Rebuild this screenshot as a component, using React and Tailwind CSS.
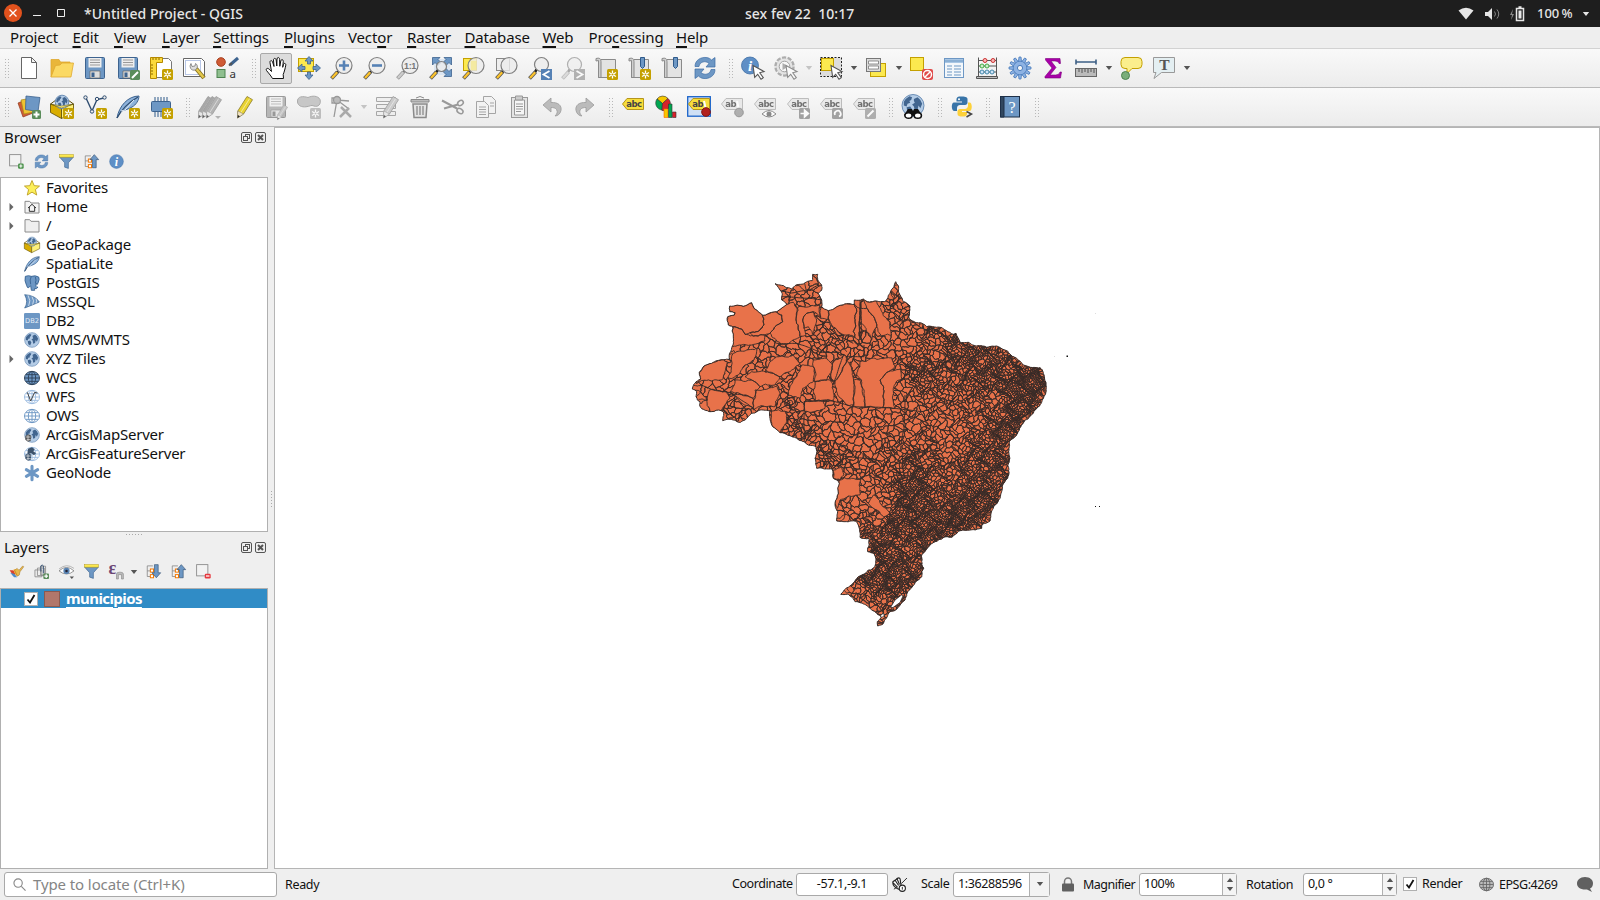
import React from "react";

/* ---------- map geometry ---------- */

// Each coastline section is digitised in thirds of a pixel from its own origin.
const section = (ox, oy, flat) => {
  const out = [];
  for (let i = 0; i < flat.length; i += 2) out.push([ox + flat[i] / 3, oy + flat[i + 1] / 3]);
  return out;
};
const NW = (f) => section(680, 265, f);
const NE = (f) => section(880, 265, f);
const SO = (f) => section(780, 450, f);

const OUTLINE = [
  ...NW([37,372,48,350,62,342,58,322,72,303,100,292,130,284,148,284,152,260,160,215,158,185,145,180,143,155,163,150,165,143,149,140,149,123,190,124,215,113,222,130,235,140,247,150,262,147,290,140,322,118,305,105,307,90,300,75,285,56,300,60,320,68,335,72,345,62,370,57,397,47,398,28,413,28,413,45,425,60,425,75,415,85,425,105,425,125,445,137,470,125,500,116,523,118,523,105,550,102,562,110,590,108,613,110,630,85]),
  ...NE([47,50,55,62,60,90,70,110,90,123,88,150,87,160,105,172,130,177,140,185,170,187,200,197,220,208,228,205,240,233,265,232,290,243,320,247,350,243,380,257,410,280,430,300,450,307,480,308,490,325,498,360,495,390,485,412,460,445,435,465,415,500,400,520,388,530,387,570]),
  ...SO([688,30,683,85,668,105,660,145,645,165,632,195,630,213,608,222,605,235,570,240,540,242,515,262,490,263,465,275,440,297,425,315,425,335,431,355,425,380,405,398,388,420,375,450,355,472,330,485,322,500,308,523,293,528,292,515,305,500,290,490,270,475,240,458,225,455,205,432,182,433,205,412,235,380,265,360,285,350,288,330,283,312,263,305,268,285,267,265,240,262,235,225,230,215,195,215,170,213,173,185,165,160,175,130,178,100,160,85,157,58,110,55]),
  ...NW([410,610,405,580,408,545,380,537,350,520,330,512,300,503,275,480,270,460,270,437,240,435,215,445,200,460,182,472,160,465,128,467,130,440,115,435,90,440,60,425,60,410,48,395,50,380]),
];

const LARGE = [
  NW([149,123,190,124,215,113,222,130,235,140,247,150,252,180,240,195,210,203,195,208,185,192,160,185,145,180,143,155,163,150,165,143,149,140]),
  NW([247,150,262,147,290,140,305,150,308,170,285,185,270,205,255,210,220,213,210,203,240,195,252,180]),
  NW([160,185,185,192,195,208,220,213,255,210,255,228,235,235,200,240,157,245,158,215]),
  NW([290,140,322,118,340,112,355,135,348,165,355,195,360,215,330,232,305,240,290,228,275,215,270,205,285,185,308,170,305,150]),
  NW([355,125,420,122,422,155,400,140,380,145,368,165,372,190,378,212,360,215,355,195,348,165]),
  NW([380,145,400,140,410,165,403,190,398,208,385,185,372,190,368,165]),
  NW([445,137,470,125,500,116,523,118,530,140,525,170,520,200,525,218,500,210,475,200,450,180,445,160]),
  NW([422,127,445,137,445,163,422,160]),
  NW([523,118,540,130,540,225,525,218,520,200,525,170,530,140]),
  NW([550,102,562,110,590,108,605,140,630,170,635,210,605,212,590,185,575,150,560,130]),
  NW([540,130,560,130,575,150,590,185,575,225,560,200,540,170]),
  NW([62,342,58,322,72,303,100,292,130,284,142,290,135,320,125,345,95,348,48,355]),
  NW([200,255,230,250,222,285,195,300,175,330,145,340,155,300,160,265]),
  NW([215,320,250,318,280,325,300,335,285,360,240,365,215,345,195,335]),
  NW([290,275,340,270,360,295,330,320,300,335,280,325,255,315,270,290]),
  NW([225,375,290,363,300,385,285,425,220,435,225,400]),
  NW([88,375,140,380,150,400,125,435,90,440,82,405]),
  NW([165,345,215,345,240,365,228,378,220,400,190,390,150,380,160,365]),
  NW([150,382,190,392,220,402,220,432,185,415]),
  NW([365,300,400,305,400,350,368,370,360,400,325,390,330,365,345,340]),
  NW([400,285,440,280,455,295,440,345,405,350,400,305]),
  NW([405,350,450,345,460,375,458,408,405,408,400,380]),
  NW([465,285,495,270,500,290,485,320,462,350,452,330]),
  NW([500,285,510,300,520,340,520,420,500,420,470,380,465,350,485,320]),
  NW([520,345,540,345,555,428,520,425]),
  NW([540,290,635,278,645,305,625,320,600,345,608,428,555,428,545,345,530,330]),
  NW([600,345,625,320,660,312,665,340,640,370,645,430,608,428]),
  NW([375,410,430,408,435,430,400,440,375,440]),
  NW([275,438,315,438,320,470,300,503,275,480]),
  SO([180,90,215,85,242,88,240,135,205,138,180,150,172,175,165,160,175,130]),
  SO([160,60,185,50,192,75,180,90,160,85]),
  SO([280,135,305,165,330,190,310,200,285,178,265,160]),
];

const BORDERS = [
  NW([373,408,373,530]), NW([375,408,458,408,515,425,660,432,725,440]), NW([255,210,290,235,350,235,420,262,480,262]),
  NW([60,358,100,375,150,383,220,430]), NW([420,165,460,210,500,260]), NW([445,160,470,210,520,235]),
  NW([540,105,540,225]), NW([543,110,543,225]), NW([490,270,458,360]), NW([552,240,552,275,500,275]),
  NW([305,78,335,84,390,74,415,60]), NW([305,95,345,97,390,100,420,104]),
  SO([110,0,200,20,290,30]), NE([75,390,72,490,60,560]),
];

// x, y, typical cell width
const SPACING = [
  715,330,26, 740,355,11, 770,352,9, 710,395,12, 735,415,7, 760,390,14, 780,330,22, 800,290,11, 815,300,9,
  850,310,18, 830,345,7, 850,350,8, 820,390,12, 850,390,14, 880,390,22, 800,405,7, 798,428,4.2, 805,435,4,
  830,425,12, 850,430,11, 832,459,3.6, 870,445,10, 900,308,5, 885,320,11, 895,345,9, 915,335,8, 930,328,1.9,
  955,340,2, 955,360,2.4, 935,350,7, 905,400,7, 905,425,9, 925,372,2.4, 950,420,8, 950,385,4.5, 990,405,4.6,
  985,375,2, 1010,365,2, 1030,385,1.3, 1035,395,1.3, 1018,378,1.3, 1020,410,1.4, 1005,430,1.8, 950,445,8,
  970,420,5, 985,450,2.4, 985,480,2.3, 965,465,2.8, 930,450,4.2, 900,460,4.5, 912,465,1.7, 912,485,1.7,
  860,470,7, 880,470,5.5, 850,490,12, 845,515,8, 875,500,10, 880,515,7, 905,510,1.4, 890,525,1.5, 935,525,1.4,
  940,495,3.2, 960,515,1.3, 980,500,1.4, 945,475,4.2, 990,490,1.9, 875,545,1.5, 905,547,2.8, 900,560,1.8,
  885,572,1.3, 915,575,1.4, 850,592,5.5, 865,575,1.8, 890,585,1.4, 903,582,3, 870,602,6, 882,605,4, 895,593,1.5,
];

const spacingAt = (x, y) => {
  let a = 0, b = 0;
  for (let i = 0; i < SPACING.length; i += 3) {
    const dx = x - SPACING[i], dy = y - SPACING[i + 1];
    const w = 1 / Math.pow(dx * dx + dy * dy + 6, 1.9);
    a += w * Math.log(SPACING[i + 2]);
    b += w;
  }
  const noise = Math.sin(x * 0.41 + Math.sin(y * 0.23) * 2) * Math.sin(y * 0.37 + Math.sin(x * 0.19) * 2);
  return Math.exp(a / b + noise * 0.38);
};

const inside = (x, y, poly) => {
  let r = false;
  for (let i = 0, j = poly.length - 1; i < poly.length; j = i++) {
    const [xi, yi] = poly[i], [xj, yj] = poly[j];
    if (yi > y !== yj > y && x < ((xj - xi) * (y - yi)) / (yj - yi) + xi) r = !r;
  }
  return r;
};

const hash = (a, b) => {
  const s = Math.sin(a * 12.9898 + b * 78.233) * 43758.5453;
  return s - Math.floor(s) - 0.5;
};

const rough = (p, q, amp, out) => {
  const len = Math.hypot(q[0] - p[0], q[1] - p[1]);
  if (len > 2.6) {
    const mx = (p[0] + q[0]) / 2, my = (p[1] + q[1]) / 2;
    const kx = Math.round(mx * 10), ky = Math.round(my * 10);
    const m = [mx + hash(kx, ky) * len * amp, my + hash(ky, kx) * len * amp];
    rough(p, m, amp, out);
    rough(m, q, amp, out);
  } else out.push(q[0].toFixed(1) + " " + q[1].toFixed(1));
};

const trace = (poly, closed, amp) => {
  const out = [poly[0][0].toFixed(1) + " " + poly[0][1].toFixed(1)];
  const n = closed ? poly.length : poly.length - 1;
  for (let i = 0; i < n; i++) rough(poly[i], poly[(i + 1) % poly.length], amp, out);
  return "M" + out.join("L") + (closed ? "Z" : "");
};

const warp = ([x, y]) => [
  x + 2.3 * Math.sin(y * 0.31 + x * 0.11) + 1.1 * Math.sin(y * 0.57 - x * 0.23 + 1),
  y + 2.3 * Math.sin(x * 0.29 - y * 0.09 + 2) + 1.1 * Math.sin(x * 0.53 + y * 0.27),
];

const buildCells = () => {
  let seed = 20219;
  const rnd = () => ((seed = (seed * 1664525 + 1013904223) % 4294967296) / 4294967296);
  const G = 6, grid = new Map(), sites = [];
  const near = (x, y, r, fn) => {
    for (let gx = Math.floor((x - r) / G); gx <= Math.floor((x + r) / G); gx++)
      for (let gy = Math.floor((y - r) / G); gy <= Math.floor((y + r) / G); gy++) {
        const c = grid.get(gx * 1000 + gy);
        if (c) for (const s of c) if (fn(s) === false) return;
      }
  };
  for (let k = 0; k < 80000; k++) {
    const x = 685 + rnd() * 368, y = 267 + rnd() * 368;
    const u = rnd();
    if (!inside(x, y, OUTLINE)) continue;
    const full = spacingAt(x, y);
    const r = full * (0.42 + u * 0.7);
    let ok = true;
    near(x, y, r, (s) => {
      if (Math.hypot(s[0] - x, s[1] - y) < r) return (ok = false);
    });
    if (!ok) continue;
    const s = [x, y, full];
    sites.push(s);
    const key = Math.floor(x / G) * 1000 + Math.floor(y / G);
    if (!grid.has(key)) grid.set(key, []);
    grid.get(key).push(s);
  }
  const parts = [];
  for (const s of sites) {
    const R = s[2] * 1.5 + 2;
    let poly = [[s[0] - R, s[1] - R], [s[0] + R, s[1] - R], [s[0] + R, s[1] + R], [s[0] - R, s[1] + R]];
    near(s[0], s[1], R * 1.7, (t) => {
      if (t === s) return;
      const nx = t[0] - s[0], ny = t[1] - s[1];
      const c = (nx * (t[0] + s[0]) + ny * (t[1] + s[1])) / 2;
      const next = [];
      for (let i = 0; i < poly.length; i++) {
        const p = poly[i], q = poly[(i + 1) % poly.length];
        const dp = p[0] * nx + p[1] * ny - c, dq = q[0] * nx + q[1] * ny - c;
        if (dp <= 0) next.push(p);
        if (dp < 0 !== dq < 0) {
          const u = dp / (dp - dq);
          next.push([p[0] + (q[0] - p[0]) * u, p[1] + (q[1] - p[1]) * u]);
        }
      }
      poly = next;
      if (!poly.length) return false;
    });
    if (poly.length > 2) parts.push(trace(poly.map(warp), true, 0.5));
  }
  return parts.join("");
};

const CELLS = buildCells();
const COAST = trace(OUTLINE, true, 0.22);
const BIG = LARGE.map((p) => trace(p, true, 0.25)).join("");
const LINES = BORDERS.map((p) => trace(p, false, 0.04)).join("");

function BrazilMap() {
  return (
    <svg viewBox="275 128 1324 740" className="block h-full w-full">
      <clipPath id="coast"><path d={COAST} /></clipPath>
      <path d={COAST} fill="#e8724a" />
      <g clipPath="url(#coast)" stroke="#3a2d29" strokeWidth="0.9">
        <path d={CELLS} fill="none" />
        <path d={BIG} fill="#e8724a" />
        <path d={LINES} fill="none" strokeWidth="1" />
        <circle cx="790" cy="403" r="5.5" fill="none" />
        <circle cx="790" cy="403" r="2.8" fill="none" />
      </g>
      <path d={COAST} fill="none" stroke="#3a2d29" strokeWidth="1" />
      <path d="M901.500 595L895 600L890.500 607.500L893 607.500L900 602.500L903 596ZM880 616L883 613.500L884.500 615L882 617.500Z" fill="#fff" stroke="#3a2d29" strokeWidth=".8" />
      <path d="M1066.500 355.500h1.500v1.500h-1.500zM1095 506h1v1h-1zM1099 506h1v1h-1z" fill="#111" />
      <path d="M1054 356h1v1h-1zM1095 313h1v1h-1z" fill="#ddd" />
    </svg>
  );
}

/* ---------- icon parts ---------- */

const B = "#6d97c4";
const BD = "#3d638f";

const Star = () => (
  <g>
    <rect x="13" y="13" width="11" height="11" rx="1.5" fill="#c4a000" />
    <path d="M18.500 14.500v8M15 16.500l7 4M22 16.500l-7 4" stroke="#fff" strokeWidth="1.3" />
    <circle cx="18.500" cy="18.500" r="1.3" fill="#c4a000" stroke="#fff" strokeWidth=".8" />
  </g>
);
const Plus = () => (
  <g>
    <rect x="15" y="15" width="9" height="9" rx="1.500" fill="#5a8c5a" />
    <path d="M19.500 16.500v6M16.500 19.500h6" stroke="#fff" strokeWidth="2" />
  </g>
);
const Lens = ({ cx = 14, cy = 9.5, r = 8, grey }) => (
  <g>
    <path d={`M${cx - r * 0.7} ${cy + r * 0.7}L6.500 17`} stroke={grey ? "#777" : "#222"} strokeWidth="2.600" />
    <path d="M7.500 16L1.500 22.500" stroke={grey ? "#999" : "#555"} strokeWidth="3.800" />
    <path d="M7.200 16.300L2 22" stroke={grey ? "#ccc" : "#fcc32c"} strokeWidth="2.300" />
    <circle cx={cx} cy={cy} r={r} fill="#ececec" fillOpacity=".8" stroke="#808080" strokeWidth="1.200" />
  </g>
);
const Cursor = () => <path d="M12 9.500l11 6-4.200 1.200 3.500 5-2.300 1.600-3.300-5-3 3z" fill="#fff" stroke="#555" strokeWidth="1.100" />;
const Arrows = () => (
  <g stroke={BD} strokeWidth=".8" fill={B}>
    <path d="M12 0.500l4 4.500h-2.500v3h-3V5H8zM12 23.500l4-4.500h-2.500v-3h-3v3H8zM.5 12L5 8v2.500h3v3H5V16zM23.500 12L19 8v2.500h-3v3h3V16z" />
  </g>
);
const Floppy = () => (
  <g>
    <rect x="2.500" y="1.500" width="19" height="21" rx="1" fill={B} stroke={BD} />
    <path d="M5.500 2h13v9.500h-13z" fill="#eee" />
    <path d="M7 4h10M7 6.500h10M7 9h10" stroke="#999" />
    <path d="M7 15h10v7H7z" fill="#ddd" stroke="#666" strokeWidth=".7" />
    <rect x="8.500" y="16.500" width="3" height="4.500" fill={BD} />
  </g>
);
const Pencil = ({ c = "#e9d331", x = 0 }) => (
  <g transform={`translate(${x} 0)`}>
    <path d="M16 1.500l5.500 3.200L12.500 19l-6 4 .3-7z" fill={c} stroke="#8a7a28" strokeWidth=".8" />
    <path d="M18.700 3.500L9.500 18" stroke="#fff" strokeOpacity=".5" />
    <path d="M6.500 23l.3-7 5.700 3z" fill="#f3e3c0" stroke="#777" strokeWidth=".5" />
    <path d="M6.500 23l.3-3 2.200 1.200z" fill="#222" />
  </g>
);
const Globe = ({ cx = 12, cy = 12, r = 11 }) => (
  <g>
    <circle cx={cx} cy={cy} r={r} fill="#b4cce6" stroke="#6a8db5" />
    <g transform={`translate(${cx - r} ${cy - r}) scale(${r / 12})`} fill="#41658f">
      <path d="M4 5l4-3 3 1-1 3-2 1 1 2-3 1-1 3-3-1 0-4zM13 5l4-2 3 3 2 4-2 5-2-3-1 5-3 1-1-5-2-2 3-2-1-2zM5 14l4-1 2 3-2 5-3-2z" />
    </g>
  </g>
);
const Roll = () => (
  <g stroke="#8a8a8a">
    <path d="M7 3.500h14.500v18H4" fill="#e3e3e3" />
    <path d="M2 2.500q5-1.500 5 3v16H4.500v-17L2 5z" fill="#cfcfcf" />
  </g>
);
const Tag = ({ t = "abc", fill = "#f7de3b", edge = "#b5951d" }) => (
  <g>
    <path d="M1.500 9L6 3.500h16.500v11H6z" fill={fill} stroke={edge} />
    <text x="5.300" y="11.800" fontSize="8.500" fontWeight="700" fontFamily="DejaVu Sans, sans-serif" letterSpacing="-.6" fill="#444">{t}</text>
  </g>
);
const Refresh = () => (
  <g fill={B} stroke="#3b6ca5" strokeWidth=".7">
    <path d="M2 10.500C2 4 8 1 13 1.500c3 .2 4.500 1.500 5.500 2.500L22 1.500V11h-9l3-3.500C12.500 4 6.500 6 6 10.500z" />
    <path d="M22 13.500C22 20 16 23 11 22.500c-3-.2-4.500-1.500-5.500-2.500L2 22.500V13h9l-3 3.500c3.500 3.500 9.500 1.500 10-3z" />
  </g>
);
const Info = ({ r = 10, cx = 12, cy = 12 }) => (
  <g>
    <circle cx={cx} cy={cy} r={r} fill="#5e8fc6" stroke="#3f6ea5" strokeWidth=".8" />
    <text x={cx} y={cy + r * 0.62} textAnchor="middle" fontSize={r * 1.75} fontStyle="italic" fontWeight="700" fontFamily="Liberation Serif, serif" fill="#fff">i</text>
  </g>
);
const Teeth = ({ n = 10, r = 7.3, fill, stroke }) => (
  <g fill={fill} stroke={stroke} strokeWidth=".8">
    {Array.from({ length: n }, (_, i) => (
      <path key={i} d="M11 1h2l.8 6h-3.600z" transform={`rotate(${(360 / n) * i} 12 12)`} />
    ))}
    <circle cx="12" cy="12" r={r} />
  </g>
);
const Funnel = () => (
  <g>
    <path d="M1 5h22l-8 9v9l-6-2v-7z" fill={B} stroke={BD} />
    <rect x="1" y="1" width="22" height="4" fill="#fce94f" stroke="#b59b10" strokeWidth=".8" />
  </g>
);
const Feather = () => (
  <g>
    <path d="M1 23C3 11 12 1 23 1c0 4-3 9-7 11-3 2-7 3-11 4z" fill="#8db2da" stroke={BD} />
    <path d="M1 23Q8 10 22 2" fill="none" stroke="#2f4d70" strokeWidth="1.200" />
    <path d="M5 16l4-1 9-10" fill="none" stroke="#e1ecf8" />
  </g>
);
const Box = () => (
  <g>
    <path d="M0.500 9l11 4v10.500l-11-6z" fill="#d9ad00" stroke="#5b4a00" strokeWidth=".8" />
    <path d="M23.500 9l-12 4v10.500l12-6z" fill="#fdf07a" stroke="#5b4a00" strokeWidth=".8" />
    <path d="M.5 9L6 5M23.500 9L18 5" stroke="#5b4a00" />
    <Globe cx={12} cy={7} r={6.8} />
    <path d="M.5 9l11 4 12-4-12 2z" fill="#fdf07a" stroke="#5b4a00" strokeWidth=".5" />
  </g>
);
const Tree = ({ up }) => (
  <g>
    <path d="M2 3h9M2 3v17h5M2 11h5" fill="none" stroke="#888" strokeWidth="1.300" />
    <rect x="7" y="8" width="5" height="5" fill="#fff" stroke="#f57900" strokeWidth="1.600" />
    <rect x="7" y="17" width="5" height="5" fill="#fff" stroke="#f57900" strokeWidth="1.600" />
    <path d={up ? "M16.500 1l7 8h-4v13h-6V9h-4z" : "M16.500 22l7-8h-4V1h-6v13h-4z"} fill={B} stroke="#2f4d70" />
  </g>
);
const WebGlobe = ({ fill = "#fff", stroke = "#6d97c4" }) => (
  <g fill="none" stroke={stroke} strokeWidth="1.400">
    <ellipse cx="12" cy="12" rx="11.300" ry="10" fill={fill} />
    <ellipse cx="12" cy="12" rx="5.500" ry="10" />
    <path d="M12 2v20M1 12h22M3 7h18M3 17h18" />
  </g>
);

const ICONS = {
  newdoc: <path d="M4.500 1.500h10l5 5v16h-15zM14.500 1.500v5h5" fill="#fff" stroke="#666" />,
  open: <g stroke="#e0a82e" strokeWidth=".8"><path d="M1 21V3.500h8l1.500 2.500H20V9" fill="#e9b63a" /><path d="M1 21L5.500 9.500l4.500-.5 2-2h11.500L21 21z" fill="#fbd964" /></g>,
  save: <Floppy />,
  saveas: <g><Floppy /><rect x="14" y="14" width="10" height="10" rx="1.500" fill="#5a8c5a" /><path d="M16 22l6-6" stroke="#fff" strokeWidth="2" /></g>,
  layout: <g><path d="M4.500 2.500h15l3 3v16h-18z" fill="#fff" stroke="#777" /><path d="M1.500 1.500h12v5h-6v16h-6z" fill="#fbd93c" stroke="#b58900" /><path d="M4 2v2M7 2v2M10 2v2M2 9h2M2 12h2M2 15h2M2 18h2" stroke="#8a6a00" /><Star /></g>,
  layoutmgr: <g><path d="M1.500 2.500h18l3 3v15h-21z" fill="#fff" stroke="#666" /><rect x="3.500" y="4.500" width="15" height="14" fill="none" stroke="#b7c6e6" /><path d="M14 12.500l8 9.500" stroke="#8a7420" strokeWidth="4.200" /><path d="M14.500 13l7 8.500" stroke="#e3c84c" strokeWidth="2.400" /><path d="M9 7.500l1 3 3-.5.5-2.500c2 1 2.500 3.500 1 5.500-1.500 1.500-3.500 1.500-5 .5-1.500-1.500-2-4-.5-6z" fill="#ddd" stroke="#777" strokeWidth=".8" /></g>,
  style: <g><circle cx="6" cy="6" r="4.300" fill="#cf5b35" stroke="#a8401f" /><path d="M15 9l8-7" stroke={BD} strokeWidth="3" /><path d="M14 9.500l3-2.500" stroke="#555" strokeWidth="2" /><rect x="2" y="13.500" width="8" height="8" fill="#8fbf8f" stroke="#4d8350" /><text x="14.500" y="22" fontSize="11.500" fontFamily="Noto Sans, sans-serif" fill="#333">a</text></g>,
  hand: <path d="M8.500 22.500C6.500 19 4 16.500 2.500 14.500c-1-1.800 1-3 2.700-1.300L7.500 15.500 6 6.500c-.3-2.200 2-2.500 2.600-.5L10 10.500 9.500 4c0-2 2.300-2.200 2.700 0l.6 6L13 3c.1-2 2.500-2 2.600.3l.2 7 1-5.500c.4-1.800 2.600-1.500 2.500.5l-.6 6 .8-3c.5-1.500 2.500-1 2.300.8-.8 4-1.300 6-2.600 9.400l.3 4z" fill="#fff" stroke="#111" strokeWidth="1" />,
  pan: <g><rect x="1.500" y="2.500" width="15" height="13" fill="#fce94f" stroke="#c4a000" /><Arrows /></g>,
  zoomin: <g><Lens /><path d="M14 4.500v10M9 9.500h10" stroke="#5581b5" strokeWidth="2.600" /></g>,
  zoomout: <g><Lens /><path d="M9 9.500h10" stroke="#5581b5" strokeWidth="2.600" /></g>,
  native: <g><Lens grey /><text x="14" y="13" textAnchor="middle" fontSize="9" fontWeight="700" fontFamily="Liberation Sans, sans-serif" fill="#777" letterSpacing="-.4">1:1</text></g>,
  full: <g><rect x="5" y="3" width="16" height="16" fill="#dce6f1" /><path d="M3.500 1.500h7.500l-2 2 3 3-3 3-3-3-2.500 2.500zM22.500 1.500h-7.500l2 2-3 3 3 3 3-3 2.500 2.500zM22.500 20.500h-7.500l2-2-3-3 3-3 3 3 2.500-2.500z" fill={B} stroke={BD} strokeWidth=".8" /><Lens cx={12.5} cy={10.500} r={5} /></g>,
  zoomsel: <g><rect x="1.500" y="2.500" width="13" height="12" fill="#fce94f" stroke="#c4a000" /><Lens /><path d="M9 5h5.500v9H9z" fill="#fce94f" opacity=".35" /></g>,
  zoomlayer: <g><rect x="1.500" y="2.500" width="13" height="12" fill="#eee" stroke="#888" /><Lens /></g>,
  zoomlast: <g><Lens cx={13.500} cy={8.500} r={7} /><rect x="13" y="13" width="11" height="11" fill="#5581b5" /><path d="M21.500 15l-6 3.500 6 3.500" fill="none" stroke="#fff" strokeWidth="1.800" /></g>,
  zoomnext: <g opacity=".6"><Lens cx={13.500} cy={8.500} r={7} grey /><rect x="13" y="13" width="11" height="11" fill="#888" /><path d="M15.500 15l6 3.500-6 3.500" fill="none" stroke="#fff" strokeWidth="1.800" /></g>,
  newmap: <g><Roll /><Star /></g>,
  bookmarkadd: <g><Roll /><path d="M13.500 1.500h4v9l-2 2-2-2z" fill={B} stroke="#2f5a8a" /><Star /></g>,
  bookmark: <g><Roll /><path d="M13.500 1.500h4v9l-2 2-2-2z" fill={B} stroke="#2f5a8a" /></g>,
  refresh: <Refresh />,
  identify: <g><Info r={8.500} cx={9} cy={9.500} /><Cursor /></g>,
  action: <g opacity=".65"><g transform="translate(-1.500 -1.500)"><circle cx="12" cy="12" r="8.500" fill="#d4d4d4" stroke="#888" strokeWidth="3.500" strokeDasharray="4 1.340" /><circle cx="12" cy="12" r="8" fill="#ddd" /><circle cx="12" cy="12" r="5.300" fill="#fafafa" stroke="#777" /><path d="M10 8.500l6 3.500-6 3.500z" fill="#888" /></g><Cursor /></g>,
  select: <g><rect x="1.500" y="1.500" width="21" height="19" fill="#ddd" stroke="#222" strokeDasharray="2 1.500" /><rect x="2.500" y="2.500" width="12" height="12" fill="#fce94f" stroke="#c4a000" /><Cursor /></g>,
  selform: <g><rect x="6.500" y="7.500" width="15" height="13" fill="#fce94f" stroke="#c4a000" /><rect x="2.500" y="2.500" width="14" height="13" fill="#ddd" stroke="#777" /><path d="M4.500 5h10v3h-10zM4.500 10h10v3h-10z" fill="#fff" stroke="#777" strokeWidth=".8" /></g>,
  deselect: <g><rect x="1.500" y="1.500" width="13" height="13" fill="#fce94f" stroke="#c4a000" /><rect x="13" y="13" width="11" height="11" rx="2" fill="#e04a4a" /><circle cx="18.500" cy="18.500" r="4" fill="none" stroke="#fff" strokeWidth="1.500" /><path d="M15.500 21.500l6-6" stroke="#fff" strokeWidth="1.500" /></g>,
  table: <g><rect x="2.500" y="2.500" width="19" height="19" fill="#f3f7fb" stroke="#6d97c4" /><path d="M3 3h18v4H3z" fill="#a8c6e4" /><path d="M3 5h18M5 10h5M12 10h7M5 13h5M12 13h7M5 16h5M12 16h7M5 19h5M12 19h7" stroke="#6d97c4" strokeWidth="1.200" /></g>,
  abacus: <g><path d="M3.500 1.500v19M21.500 1.500v19M3 4.500h18M3 10h18M3 16h18" stroke="#555" /><path d="M1.500 20.500h21v2h-21z" fill="#bbb" stroke="#555" /><g strokeWidth="1"><g fill="#f8b5b5" stroke="#c33"><circle cx="10" cy="4.500" r="2" /><circle cx="18" cy="4.500" r="2" /></g><g fill="#cfeecd" stroke="#4a4"><circle cx="7" cy="10" r="2" /><circle cx="12" cy="10" r="2" /></g><g fill="#cfe3f7" stroke="#48a"><circle cx="7" cy="16" r="2" /><circle cx="12" cy="16" r="2" /><circle cx="17" cy="16" r="2" /></g></g></g>,
  gear: <g><Teeth n={12} r={6.800} fill="#8db2e3" stroke="#4b7dbd" /><circle cx="12" cy="12" r="2.600" fill="#f6f6f6" stroke="#4b7dbd" /></g>,
  sigma: <path d="M4.500 2.500h14.500l.5 5h-1.500q-.5-2.500-4-2.500H10l5 6.500-6 7.500h5.500q4 0 4.500-3h1.500l-1 6H4v-1.500l7-8.500-6.500-8z" fill="#a900a9" stroke="#7a007a" strokeWidth=".6" />,
  ruler: <g><path d="M2 6h20M2 3.500v5M22 3.500v5" stroke="#3d5f85" strokeWidth="1.600" /><rect x="1.500" y="12.500" width="21" height="8" fill="#bbb" stroke="#666" /><path d="M5 13v3M8 13v4M11 13v3M14 13v4M17 13v3M20 13v4" stroke="#555" /></g>,
  tips: <g><path d="M6 1.500h13q4 0 4 4v3q0 4-4 4h-6l-5 5v-5H6q-4 0-4-4v-3q0-4 4-4z" fill="#fbee8c" stroke="#c4a000" /><circle cx="6.500" cy="19.500" r="4" fill="#7aae7a" stroke="#4d8350" /></g>,
  annot: <g><path d="M1.500 1.500h21v15h-13l-7.500 6 2-6H1.500z" fill="#e4eff2" stroke="#999" /><text x="12.300" y="14.300" textAnchor="middle" fontSize="15.500" fontFamily="Liberation Serif, serif" fontWeight="700" fill="#555">T</text></g>,

  datasource: <g><path d="M1 8l10-4 5 14-10 4z" fill="#cf5b35" stroke="#8e3a1c" strokeWidth=".7" /><path d="M4 5l11-2 2 14-10 2z" fill="#f0c330" stroke="#a8861a" strokeWidth=".7" /><path d="M9 1l14 1.500-2 14-12.500-2z" fill={B} stroke={BD} strokeWidth=".8" /><Plus /></g>,
  gpkgnew: <g><Box /><Star /></g>,
  shpnew: <g><path d="M3 3l6 13M9 16L14 4.500 21 3" fill="none" stroke="#2f4d70" strokeWidth="1.400" /><g fill="#eee" stroke="#2f4d70"><circle cx="2.500" cy="2.500" r="1.700" /><circle cx="9" cy="16.500" r="1.700" /><circle cx="14" cy="4" r="1.700" /><circle cx="21.500" cy="2.500" r="1.700" /></g><Star /></g>,
  spatialnew: <g><Feather /><Star /></g>,
  memnew: <g><path d="M6 2v20M9 2v20M12 2v20M15 2v20M18 2v20" stroke="#2f5a8a" /><rect x="2.500" y="6.500" width="19" height="10" rx="1" fill={B} stroke={BD} /><Star /></g>,
  edits: <g className="grayscale" opacity=".7"><Pencil c="#888" x={-6} /><Pencil c="#888" x={-2} /><Pencil c="#999" x={2} /><path d="M17 21h6l-3 3z" fill="#999" /></g>,
  edit: <Pencil />,
  saveedit: <g className="grayscale" opacity=".6"><Floppy /><g transform="translate(9 9) scale(.68)"><Pencil c="#aaa" /></g></g>,
  addpoly: <g className="grayscale" opacity=".6"><path d="M.5 7C0 1 6 1 11 2.500c4-2 10-2 12 2 1.500 4.500-2 8-6 6.500-3-1.500-4 .5-8 .8-4.500.4-8-1-8.500-4.800z" fill="#aaa" stroke="#777" /><Star /></g>,
  vertex: <g fill="none" stroke="#999" strokeWidth="1.300"><path d="M4 22L7 5l12 1M7 5l12 9M2 3h7v5H2z" /><circle cx="7" cy="5" r="3.500" fill="#bbb" /><path d="M10 22l9-9M11 12l10 10" strokeWidth="2.500" stroke="#aaa" /></g>,
  multi: <g className="grayscale" opacity=".7"><path d="M1.500 2.500h19v4h-19zM1.500 9.500h19v4h-19zM1.500 16.500h19v4h-19z" fill="#eee" stroke="#888" /><g transform="translate(2 0)"><Pencil c="#bbb" /></g></g>,
  trash: <g fill="none" stroke="#8a8a8a"><path d="M8 3q4-3 8 0" /><path d="M3 4.500h18v2.500H3z" fill="#bbb" /><path d="M5 9h14l-1 13.500H6z" fill="#e4e4e4" strokeWidth="1.500" /><path d="M9 11v9M12 11v9M15 11v9" strokeWidth="1.300" /></g>,
  cut: <g fill="none" stroke="#999" strokeWidth="1.500"><path d="M1 5.500l15 8M3 13.500l14-4" strokeWidth="2" /><ellipse cx="19.500" cy="8" rx="3" ry="2.300" transform="rotate(-35 19.500 8)" /><ellipse cx="19" cy="16" rx="3.300" ry="2.300" transform="rotate(35 19 16)" /></g>,
  copy: <g fill="#f2f2f2" stroke="#a5a5a5"><path d="M9.500 1.500h8l4 4v13h-12z" /><path d="M2.500 6.500h8l4 4v12h-12z" /><path d="M5 12h7M5 14.500h7M5 17h7M5 19.500h7M16 8h4M16 11h4" /></g>,
  paste: <g fill="#e4e4e4" stroke="#999"><rect x="4.500" y="2.500" width="16" height="20" /><path d="M7.500 5h10v15h-10z" fill="#f6f6f6" /><path d="M8.500 1h7v4h-7z" fill="#ccc" /><path d="M9 9h7M9 11.500h7M9 14h7M9 16.500h5" /></g>,
  undo: <path d="M3 10l8-7v4.500c7-.5 11 3 10 8-.7 3.500-3.500 5.500-6 5.500 2-2 3-4 1.500-6.500-1-1.500-3-2-5.500-2V17z" fill="#bbb" stroke="#9a9a9a" strokeWidth=".8" />,
  redo: <path d="M21 10l-8-7v4.500c-7-.5-11 3-10 8 .7 3.500 3.500 5.500 6 5.500-2-2-3-4-1.500-6.500 1-1.500 3-2 5.500-2V17z" fill="#bbb" stroke="#9a9a9a" strokeWidth=".8" />,
  label: <Tag />,
  diagram: <g stroke="#333" strokeWidth=".6"><path d="M8.500 8.500L3 4a7 7 0 0 1 11-.5z" fill="#f6c800" /><path d="M8.500 8.500L3 4A7 7 0 0 0 8 15z" fill="#00a651" /><path d="M8.500 8.500l5.500-5A7 7 0 0 1 8 15.500z" fill="#d8232a" /><path d="M10 14h4v8.500h-4z" fill="#f6c800" stroke="#f60" /><path d="M14.500 9h3.500v13.500h-3.500z" fill="#00a651" /><path d="M18.500 17h3.500v5.500h-3.500z" fill="#d8232a" /></g>,
  pinhl: <g><rect x=".7" y="1.700" width="22.600" height="19.500" fill="#cfe0f5" stroke="#1a63c9" strokeWidth="1.300" /><Tag t="ab" /><path d="M17 6l2 9" stroke="#fff" strokeWidth="2" /><circle cx="19" cy="17" r="4.300" fill="#b2201f" stroke="#7d1313" /></g>,
  pin: <g opacity=".75"><Tag t="ab" fill="#e6e6e6" edge="#aaa" /><path d="M17 6l2 9" stroke="#fff" strokeWidth="2" /><circle cx="19" cy="17.500" r="4.300" fill="#999" stroke="#777" /></g>,
  lblshow: <g opacity=".75"><Tag fill="#e6e6e6" edge="#aaa" /><path d="M9 19q7-7 14 0-7 6-14 0z" fill="#fff" stroke="#666" /><circle cx="16" cy="19" r="2.500" fill="#666" /></g>,
  lblmove: <g opacity=".75"><Tag fill="#e6e6e6" edge="#aaa" /><rect x="13" y="13" width="11" height="11" rx="1.500" fill="#888" /><path d="M14.500 18.500h5M18.500 15l4 3.500-4 3.500z" fill="#fff" stroke="#fff" strokeWidth="1.500" /></g>,
  lblrot: <g opacity=".75"><Tag fill="#e6e6e6" edge="#aaa" /><rect x="13" y="13" width="11" height="11" rx="1.500" fill="#888" /><path d="M16 20a3 3 0 1 1 4 1.500" fill="none" stroke="#fff" strokeWidth="1.700" /></g>,
  lbledit: <g opacity=".75"><Tag fill="#e6e6e6" edge="#aaa" /><rect x="13" y="13" width="11" height="11" rx="1.500" fill="#999" /><path d="M15.500 21.500l6-6" stroke="#fff" strokeWidth="2" /></g>,
  metasearch: <g><Globe cx={12} cy={10.5} r={11} /><path d="M7 14h4l1 2 1-2h4l4 6-3 3-5-2h-2l-5 2-3-3z" fill="#111" /><ellipse cx="7.500" cy="20.500" rx="3.600" ry="2.800" fill="#fff" stroke="#111" strokeWidth="1.600" /><ellipse cx="16.800" cy="20.500" rx="3.600" ry="2.800" fill="#fff" stroke="#111" strokeWidth="1.600" /></g>,
  python: <g><path d="M11 1.500c-5 0-4.500 2-4.500 5H12v1H4C1 7.500 1 16 4.500 16H7v-3c0-2 1.500-3 3-3h5c1.500 0 2.500-1 2.500-2.500V4c0-2-3-2.500-6.500-2.500z" fill="#3874a8" /><circle cx="9" cy="4.200" r="1" fill="#fff" /><path d="M12.500 21.500c5 0 4.500-2 4.500-4.500h-5v-1h7.500c3 0 3-8.500 0-8.500H18v3c0 2-1.500 3.500-3 3.500h-5c-1.500 0-2.500 1-2.500 2.500V19c0 2 2 2.500 5 2.500z" fill="#fdd13a" /><path d="M16.500 16.500l5 2.500-5 3" fill="none" stroke="#444" strokeWidth="1.500" /></g>,
  help: <g><rect x="2.500" y="1.500" width="19" height="20.500" fill={B} stroke="#1e3048" /><path d="M2.500 1.500H6V22H2.500z" fill="#31475f" stroke="#1e3048" /><text x="14" y="17.500" textAnchor="middle" fontSize="16" fontFamily="Liberation Serif, serif" fill="#fff">?</text></g>,

  additem: <g><rect x="1" y="1" width="18" height="18" fill="#f2f2f2" stroke="#888" strokeWidth="1.400" /><rect x="14.500" y="15" width="9" height="8.500" rx="2" fill="#4c934c" /><path d="M19 16.500v5.500M16.500 19.200h5" stroke="#fff" strokeWidth="1.600" /></g>,
  removeitem: <g><rect x="1" y="1" width="18" height="18" fill="#f2f2f2" stroke="#888" strokeWidth="1.400" /><rect x="14" y="15.500" width="9.500" height="7.500" rx="2" fill="#e6393f" /><path d="M16 19.200h5.500" stroke="#fff" strokeWidth="2" /></g>,
  filter: <Funnel />,
  treeup: <Tree up />,
  treedown: <Tree />,
  info: <Info r={11} />,
  brush: <g><path d="M1 10l6 9q3-1 3-4l-3-5z" fill="#d8402c" /><path d="M7 9l4 10 4-2-5-9z" fill="#f4a72c" /><path d="M2 14l6 7h5l-4-5z" fill="#4c8bc9" /><path d="M9 10l4-3 3 3 6-7 1.500 1.500-6 8-1 5-3 2z" fill="#e8b84b" stroke="#9c6f1c" strokeWidth=".8" /></g>,
  addgroup: <g><path d="M1.500 9.500h11v11h-11zM5.500 6.500h11v12h-11zM10.500 3.500h8v14h-8z" fill="#eee" stroke="#888" strokeWidth="1.300" /><path d="M11 12V3q2-3 4 0v12" fill="none" stroke="#2f4d70" strokeWidth="1.400" /><Plus /></g>,
  eye: <g><path d="M0 11q12-11 24 0-12 10-24 0z" fill="#fff" stroke="#777" strokeWidth="1.200" /><path d="M0 8q12-10 24-1" fill="none" stroke="#aaa" strokeWidth="1.300" /><circle cx="12" cy="11" r="5" fill="#5a84b3" /><circle cx="12" cy="11" r="2" fill="#223" /><path d="M17 20h7l-3.500 4z" fill="#555" /></g>,
  epsilon: <g><text x="-1" y="15.500" fontSize="29" fontFamily="Liberation Serif, serif" fontWeight="700" fill="#6c4675">ε</text><path d="M12 24v-8q0-3 5.500-3t5.500 3v8h-3v-7h-5v7z" fill="#bbb" stroke="#888" /></g>,

  star: <path d="M12 .8l3.300 7.700 8 .6-6.200 5.300 2 8.200L12 18.200l-7.100 4.400 2-8.200L.7 9.100l8-.6z" fill="#fcef5a" stroke="#b99a1c" strokeWidth="1.300" />,
  home: <g><path d="M1.500 3.500h7l2 2.500h12v15h-21z" fill="#f3f3f3" stroke="#888" strokeWidth="1.500" /><path d="M6 13.500l6-5.500 6 5.500M8 12v6.500h8V12" fill="none" stroke="#333" strokeWidth="1.500" /></g>,
  folder: <path d="M1.500 2.500h7l2 2.500h12v16h-21z" fill="#efefef" stroke="#8c8c8c" strokeWidth="1.500" />,
  gpkg: <Box />,
  feather: <Feather />,
  elephant: <g><path d="M2 2q5-2 9 0 6-2 11 1 2 3-1 9-1 3-2 2l-1-2v5q1 2 3 1-2 4-5 2v3h-5l-1-7-3 3q-2 1-3-3Q0 8 2 2z" fill={B} stroke="#2f5a8a" strokeWidth="1.200" /><path d="M11 2q-3 5-1 12M17 3q2 5 0 9" fill="none" stroke="#2f5a8a" strokeWidth="1.200" /></g>,
  sail: <g><path d="M1 1q16 1 22 11Q14 16 1 21q6-9 0-20z" fill={B} stroke="#2f5a8a" /><path d="M6 2q5 8 1 16M12 4q4 6 1 12M18 7q2 4 0 7" fill="none" stroke="#fff" strokeOpacity=".8" strokeWidth="1.200" /></g>,
  db2: <g><rect x="0" y="0" width="24" height="24" rx="2" fill={B} /><text x="12" y="15.500" textAnchor="middle" fontSize="10" fontFamily="DejaVu Sans, sans-serif" fill="#e6eef7">DB2</text></g>,
  globe: <Globe />,
  wcs: <WebGlobe fill="#6d97c4" stroke="#2d4258" />,
  wfs: <g><WebGlobe stroke="#9bbbe0" /><path d="M5 5l5 13L16 5l4 1" fill="none" stroke="#444" strokeWidth="1.500" /></g>,
  ows: <WebGlobe />,
  arcmap: <g><Globe /><path d="M2 13l5-2 4 2-1 8-4 1-4-3z" fill="#555" /><path d="M3 15h7M4 19h6M6 12v9" stroke="#eee" /></g>,
  arcfeat: <g><WebGlobe stroke="#9bbbe0" /><path d="M6 4l6-2 4 3-2 3 4 3-3 3-4-3-6 1zM2 13l5-2 4 2-1 8-4 1-4-3z" fill="#3d536c" /><path d="M3 15h7M4 19h6M6 12v9" stroke="#eee" /></g>,
  geonode: <path d="M12 2v20M3.500 7l17 10M20.500 7l-17 10" stroke={B} strokeWidth="4.600" strokeLinecap="round" />,
};

const Icon = ({ name, className = "size-6" }) => (
  <svg viewBox="0 0 24 24" className={"block shrink-0 overflow-visible " + className} fill="none">{ICONS[name]}</svg>
);

const Tri = ({ className = "text-[#555]" }) => (
  <svg viewBox="0 0 8 5" className={"block h-[4px] w-[8px] " + className}><path d="M0 0h8L4 5z" fill="currentColor" /></svg>
);

const Handle = () => (
  <svg viewBox="0 0 5 19" className="block h-[19px] w-[5px] shrink-0">
    {[0, 3, 6, 9, 12, 15, 18].map((y) => <path key={y} d={`M0 ${y}h1v1H0zM3 ${y}h1v1H3z`} fill="#b8b8b8" />)}
  </svg>
);

const ROW1 = "newdoc open save saveas layout layoutmgr style | hand pan zoomin zoomout native full zoomsel zoomlayer zoomlast zoomnext newmap bookmarkadd bookmark refresh | identify action ~ select v selform v deselect table abacus gear sigma ruler v tips annot v".split(" ");
const ROW2 = "datasource gpkgnew shpnew spatialnew memnew | edits edit saveedit addpoly vertex ~ multi trash cut copy paste undo redo | label diagram pinhl pin lblshow lblmove lblrot lbledit | metasearch | python | help |".split(" ");

const Toolbar = ({ items }) => (
  <div className="flex h-[39px] shrink-0 items-center border-b border-[#b9b9b9] bg-gradient-to-b from-[#f9f9f9] to-[#ececec]">
    <div className="flex w-[12.5px] shrink-0 pl-[5px]"><Handle /></div>
    {items.map((it, i) =>
      it === "|" ? (
        <div key={i} className="flex w-[15.7px] shrink-0 pl-[8px]"><Handle /></div>
      ) : it === "v" || it === "~" ? (
        <div key={i} className="flex w-[12px] shrink-0 justify-center"><Tri className={it === "~" ? "text-[#c4c4c4]" : "text-[#555]"} /></div>
      ) : it === "hand" ? (
        <div key={i} className="flex w-[33px] shrink-0 justify-center">
          <div className="flex h-[31px] w-[32px] items-center justify-center rounded-[2px] border border-[#a9a9a9] bg-[#dcdcdc]"><Icon name={it} /></div>
        </div>
      ) : (
        <div key={i} className="flex w-[33px] shrink-0 justify-center"><Icon name={it} /></div>
      )
    )}
  </div>
);

const MENUS = [
  ["Pro", "j", "ect", "w-[62.5px]"], ["", "E", "dit", "w-[41.5px]"], ["", "V", "iew", "w-[48px]"], ["", "L", "ayer", "w-[51px]"],
  ["", "S", "ettings", "w-[71px]"], ["", "P", "lugins", "w-[64px]"], ["Vect", "o", "r", "w-[59px]"], ["", "R", "aster", "w-[57.5px]"],
  ["", "D", "atabase", "w-[78px]"], ["", "W", "eb", "w-[46px]"], ["Pro", "c", "essing", "w-[87.5px]"], ["", "H", "elp", "w-[40px]"],
];

const TREE = [
  ["star", "Favorites"], ["home", "Home", 1], ["folder", "/", 1], ["gpkg", "GeoPackage"], ["feather", "SpatiaLite"],
  ["elephant", "PostGIS"], ["sail", "MSSQL"], ["db2", "DB2"], ["globe", "WMS/WMTS"], ["globe", "XYZ Tiles", 1],
  ["wcs", "WCS"], ["wfs", "WFS"], ["ows", "OWS"], ["arcmap", "ArcGisMapServer"], ["arcfeat", "ArcGisFeatureServer"], ["geonode", "GeoNode"],
];

const PanelTitle = ({ children }) => (
  <div className="flex h-[20px] items-center pl-[4px] pr-[2px]">
    <span className="grow text-[15px] leading-none tracking-[-0.1px] text-[#111]">{children}</span>
    <svg viewBox="0 0 25 11" className="block h-[11px] w-[25px]" fill="none" stroke="#555">
      <rect x=".5" y=".5" width="10" height="10" rx="1.500" />
      <rect x="4.500" y="2.500" width="4" height="4" /><rect x="2.500" y="4.500" width="4" height="4" fill="#efefef" />
      <rect x="14.500" y=".5" width="10" height="10" rx="1.500" />
      <path d="M17 3l5 5M22 3l-5 5" strokeWidth="2" />
    </svg>
  </div>
);

const Check = () => (
  <span className="flex size-[14px] shrink-0 items-center justify-center border border-[#b0b0b0] bg-white">
    <svg viewBox="0 0 10 10" className="size-[10px]"><path d="M1.500 5.500L4 8.500 8.500 1" fill="none" stroke="#111" strokeWidth="1.800" /></svg>
  </span>
);

const Spin = ({ value, className }) => (
  <div className={"flex h-[23px] shrink-0 items-stretch rounded-[3px] border border-[#a9a9a9] bg-white " + className}>
    <span className="flex grow items-center pl-[4px] pt-[1px]">{value}</span>
    <span className="flex w-[14px] flex-col items-center justify-center gap-[5px] border-l border-[#b0b0b0] bg-[#f4f4f4]">
      <Tri className="rotate-180 text-[#555]" /><Tri />
    </span>
  </div>
);

export default function App() {
  return (
    <div className="flex h-[900px] w-[1600px] flex-col overflow-hidden bg-[#efefef] font-['Noto_Sans',sans-serif] text-[#111]">
      <header className="flex h-[27px] shrink-0 items-center bg-[#1e1e1e] text-[14px] font-medium text-[#e6e6e6]">
        <svg viewBox="0 0 84 27" className="block h-[27px] w-[84px] shrink-0" fill="none">
          <circle cx="13" cy="13" r="9" fill="#e2521d" />
          <path d="M9.500 9.500l7 7M16.500 9.500l-7 7" stroke="#fff" strokeWidth="1.300" />
          <path d="M33 15.500h8M57.500 9.500h7v7h-7z" stroke="#eee" />
        </svg>
        <span className="w-[661px] whitespace-nowrap pb-[1px] tracking-[0.05px]">*Untitled Project - QGIS</span>
        <span className="w-[713px] whitespace-pre pb-[1px] tracking-[0.03px]">sex fev 22  10:17</span>
        <svg viewBox="-8 0 68 20" className="mr-[11px] block h-[20px] w-[68px] shrink-0">
          <path d="M-7.500 6.500q7.500-5.500 15 0L0 15.500z" fill="#e6e6e6" />
          <path d="M19 8h3l4-4v12l-4-4h-3z" fill="#e6e6e6" />
          <path d="M28.500 7.500q2 2.500 0 5M31 5.500q3.500 4.500 0 9" fill="none" stroke="#888" />
          <path d="M47 5l-3 6h2l-1 5 3-6h-2z" fill="#888" />
          <path d="M50.500 4.500h7v12h-7zM52.500 3h3" fill="none" stroke="#e6e6e6" strokeWidth="1.500" />
          <path d="M52.500 6.500h3v8h-3z" fill="#e6e6e6" />
        </svg>
        <span className="w-[45px] whitespace-nowrap text-[13px]">100{"\u2009"}%</span>
        <Tri className="text-[#e6e6e6]" />
      </header>

      <nav className="flex h-[22px] shrink-0 items-center border-b border-[#d2d2d2] bg-[#eeeeee] pb-[2px] pl-[10px] text-[15px] leading-[20px]">
        {MENUS.map(([a, u, b, w]) => (
          <span key={u + b} className={"shrink-0 whitespace-nowrap tracking-[-0.15px] " + w}>
            {a}<span className="underline decoration-[1.5px] underline-offset-[3px]">{u}</span>{b}
          </span>
        ))}
      </nav>
      <Toolbar items={ROW1} />
      <Toolbar items={ROW2} />

      <main className="flex h-[742px] shrink-0">
        <aside className="flex w-[268px] shrink-0 flex-col">
          <PanelTitle>Browser</PanelTitle>
          <div className="flex h-[30px] items-center gap-[10px] pb-[2px] pl-[8.5px]">
            {["additem", "refresh", "filter", "treeup", "info"].map((n) => <Icon key={n} name={n} className="size-[15px]" />)}
          </div>
          <div className="h-[355px] border border-[#b0b0b0] bg-white">
            {TREE.map(([ic, label, kids]) => (
              <div key={label} className="flex h-[19px] items-center">
                <svg viewBox="0 0 5 8" className="ml-[7.5px] block h-[8px] w-[5px]">{kids && <path d="M.5 0L4.500 4 .5 8z" fill="#666" />}</svg>
                <Icon name={ic} className="ml-[10.5px] size-4" />
                <span className="ml-[6px] whitespace-nowrap text-[15px] leading-none tracking-[-0.22px]">{label}</span>
              </div>
            ))}
          </div>
          <div className="flex h-[5px] items-center justify-center gap-[2px]">
            {[0, 1, 2, 3, 4, 5].map((i) => <i key={i} className="size-px bg-[#aaa]" />)}
          </div>
          <PanelTitle>Layers</PanelTitle>
          <div className="flex h-[31px] items-center gap-[10px] pb-[2px] pl-[8.5px]">
            {["brush", "addgroup", "eye", "filter", "epsilon"].map((n) => <Icon key={n} name={n} className="size-[15px]" />)}
            <span className="-ml-[4px] -mr-[2px]"><Tri /></span>
            {["treedown", "treeup", "removeitem"].map((n) => <Icon key={n} name={n} className="size-[15px]" />)}
          </div>
          <div className="grow border border-[#b0b0b0] bg-white">
            <div className="flex h-[19px] items-center bg-[#308cc6] pl-[23px]">
              <Check />
              <span className="ml-[6px] size-[16px] border border-[#8a5a50] bg-[#b1776b]" />
              <span className="ml-[6px] text-[15px] font-bold leading-none tracking-[-0.58px] text-white underline decoration-1 underline-offset-[3px]">municipios</span>
            </div>
          </div>
        </aside>
        <div className="flex w-[6px] shrink-0 flex-col items-center gap-[2px] pt-[364px]">
          {[0, 1, 2, 3, 4, 5].map((i) => <i key={i} className="size-px bg-[#aaa]" />)}
        </div>
        <section className="h-full w-[1326px] shrink-0 border border-[#b5b5b5] bg-white">
          <BrazilMap />
        </section>
      </main>

      <footer className="flex h-[31px] shrink-0 items-center pb-[1px] text-[12.5px] tracking-[-0.35px]">
        <div className="ml-[4px] flex h-[25px] w-[273px] shrink-0 items-center rounded-[3px] border border-[#a9a9a9] bg-white text-[15px] tracking-[-0.1px] text-[#858585]">
          <svg viewBox="0 0 14 14" className="ml-[8px] mr-[7px] size-[13px]" fill="none" stroke="#888" strokeWidth="1.200"><circle cx="5.500" cy="5.500" r="4.500" /><path d="M9 9l4.500 4.500" /></svg>
          Type to locate (Ctrl+K)
        </div>
        <span className="ml-[8px] w-[447px] pt-[2px]">Ready</span>
        <span className="w-[64px] pt-[1px] tracking-[-0.45px]">Coordinate</span>
        <div className="flex h-[23px] w-[92px] items-center justify-center rounded-[3px] border border-[#a9a9a9] bg-white pt-[1px]">-57.1,-9.1</div>
        <svg viewBox="0 0 16 16" className="ml-[4px] mr-[14px] block size-[15px]" fill="none" stroke="#222" strokeWidth="1.200">
          <path d="M4 3q5-5 5 2l1 6-3 2q-7-3-6-8zM3 3l4 6M5 1l3 7M1 6l5 5" fill="#fff" /><circle cx="11" cy="12" r="3.300" fill="#fff" /><path d="M10 7l6-6M2 13l3-2M11 10.500v3" strokeWidth="1" />
        </svg>
        <span className="w-[32px] pt-[1px]">Scale</span>
        <div className="flex h-[25px] w-[97px] items-stretch rounded-[3px] border border-[#a9a9a9] bg-white">
          <span className="flex grow items-center pl-[4px] pt-[1px] tracking-[-0.4px]">1:36288596</span>
          <span className="flex w-[20px] items-center justify-center border-l border-[#b0b0b0] bg-[#f3f3f3]"><Tri /></span>
        </div>
        <svg viewBox="0 0 12 15" className="ml-[12px] mr-[9px] block h-[15px] w-[12px]"><path d="M2.500 7V4.500a3.500 3.500 0 0 1 7 0V7" fill="none" stroke="#777" strokeWidth="1.500" /><rect y="6.500" width="12" height="8" rx="1" fill="#606060" /></svg>
        <span className="w-[56px] pt-[2px] tracking-[-0.5px]">Magnifier</span>
        <Spin value="100%" className="w-[98px]" />
        <span className="ml-[9px] w-[57px] pt-[2px]">Rotation</span>
        <Spin value="0,0 °" className="mr-[6px] w-[94px]" />
        <Check />
        <span className="ml-[5px] w-[57px] pt-[1px]">Render</span>
        <svg viewBox="0 0 24 24" className="mr-[5px] block size-[15px]"><WebGlobe fill="#bbb" stroke="#666" /></svg>
        <span className="w-[78px] pt-[2px] tracking-[-0.45px]">EPSG:4269</span>
        <svg viewBox="0 0 16 15" className="block h-[15px] w-[16px] shrink-0"><path d="M8 0c5 0 8 3 8 6s-1 4.500-3 5.500l2 3.500-5-2.500C3 13 0 10 0 6.500S3 0 8 0z" fill="#606060" /></svg>
      </footer>
    </div>
  );
}
